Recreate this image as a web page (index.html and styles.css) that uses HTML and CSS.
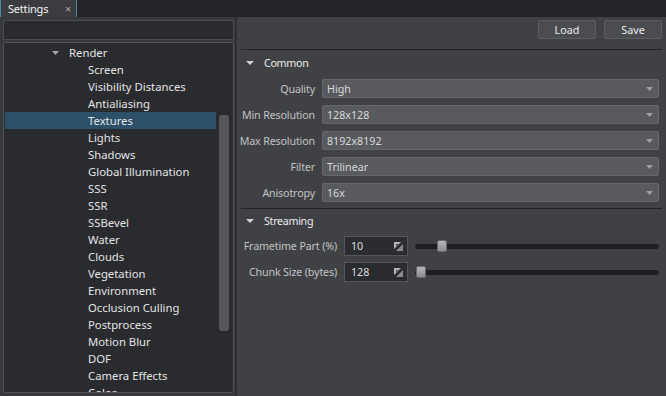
FILE: index.html
```html
<!DOCTYPE html>
<html>
<head>
<meta charset="utf-8">
<link rel="stylesheet" href="styles.css">
</head>
<body>
<div class="tabbar">
  <div class="tab"><span class="tab-title">Settings</span><span class="tab-close">×</span></div>
</div>
<div class="main">
  <div class="left">
    <div class="search"></div>
    <div class="tree">
      <div class="tree-list">
        <div class="row lvl1"><svg class="caret" width="7" height="4" viewBox="0 0 7 4"><polygon points="0,0 7,0 3.5,4" fill="#a3a4a6"/></svg><span>Render</span></div>
        <div class="row lvl2">Screen</div>
        <div class="row lvl2">Visibility Distances</div>
        <div class="row lvl2">Antialiasing</div>
        <div class="row lvl2 selected">Textures</div>
        <div class="row lvl2">Lights</div>
        <div class="row lvl2">Shadows</div>
        <div class="row lvl2">Global Illumination</div>
        <div class="row lvl2">SSS</div>
        <div class="row lvl2">SSR</div>
        <div class="row lvl2">SSBevel</div>
        <div class="row lvl2">Water</div>
        <div class="row lvl2">Clouds</div>
        <div class="row lvl2">Vegetation</div>
        <div class="row lvl2">Environment</div>
        <div class="row lvl2">Occlusion Culling</div>
        <div class="row lvl2">Postprocess</div>
        <div class="row lvl2">Motion Blur</div>
        <div class="row lvl2">DOF</div>
        <div class="row lvl2">Camera Effects</div>
        <div class="row lvl2">Color</div>
      </div>
      <div class="scroll-track"><div class="scroll-thumb"></div></div>
    </div>
  </div>
  <div class="divider"></div>
  <div class="right">
    <div class="toolbar">
      <button class="btn">Load</button>
      <button class="btn">Save</button>
    </div>
    <div class="sep"></div>
    <div class="section-head first"><svg class="caret" width="8" height="4" viewBox="0 0 8 4"><polygon points="0,0 8,0 4,4" fill="#d0d1d3"/></svg><span>Common</span></div>
    <div class="grid common">
      <div class="label"><span>Quality</span></div>
      <div class="select"><span>High</span><svg width="7" height="4" viewBox="0 0 7 4"><polygon points="0,0 7,0 3.5,4" fill="#9fa0a2"/></svg></div>
      <div class="label"><span>Min Resolution</span></div>
      <div class="select"><span>128x128</span><svg width="7" height="4" viewBox="0 0 7 4"><polygon points="0,0 7,0 3.5,4" fill="#9fa0a2"/></svg></div>
      <div class="label"><span>Max Resolution</span></div>
      <div class="select"><span>8192x8192</span><svg width="7" height="4" viewBox="0 0 7 4"><polygon points="0,0 7,0 3.5,4" fill="#9fa0a2"/></svg></div>
      <div class="label"><span>Filter</span></div>
      <div class="select"><span>Trilinear</span><svg width="7" height="4" viewBox="0 0 7 4"><polygon points="0,0 7,0 3.5,4" fill="#9fa0a2"/></svg></div>
      <div class="label"><span>Anisotropy</span></div>
      <div class="select"><span>16x</span><svg width="7" height="4" viewBox="0 0 7 4"><polygon points="0,0 7,0 3.5,4" fill="#9fa0a2"/></svg></div>
    </div>
    <div class="sep"></div>
    <div class="section-head"><svg class="caret" width="8" height="4" viewBox="0 0 8 4"><polygon points="0,0 8,0 4,4" fill="#d0d1d3"/></svg><span>Streaming</span></div>
    <div class="grid streaming">
      <div class="label"><span>Frametime Part (%)</span></div>
      <div class="spin"><span>10</span><svg width="9" height="9" viewBox="0 0 9 9"><polygon points="0,0 7,0 0,7" fill="#b4b5b7"/><polygon points="9,2 9,9 2,9" fill="#8a8b8e"/><polygon points="2,2 5,2 2,5" fill="#5c5d60"/></svg></div>
      <div class="slider"><div class="track"></div><div class="thumb" style="left:22px"></div></div>
      <div class="label"><span>Chunk Size (bytes)</span></div>
      <div class="spin"><span>128</span><svg width="9" height="9" viewBox="0 0 9 9"><polygon points="0,0 7,0 0,7" fill="#b4b5b7"/><polygon points="9,2 9,9 2,9" fill="#8a8b8e"/><polygon points="2,2 5,2 2,5" fill="#5c5d60"/></svg></div>
      <div class="slider"><div class="track"></div><div class="thumb" style="left:1px"></div></div>
    </div>
  </div>
</div>
</body>
</html>
```
FILE: styles.css
```css
* { box-sizing: border-box; }
html, body { margin: 0; padding: 0; }
body {
  width: 666px;
  height: 396px;
  overflow: hidden;
  background: #3b3c40;
  font-family: "Noto Sans", "DejaVu Sans", sans-serif;
  font-size: 11.3px;
  color: #d6d7d9;
}
.tabbar {
  height: 17px;
  background: #232427;
  display: flex;
}
.tab {
  width: 77px;
  height: 17px;
  background: #3a3c40;
  border-left: 1px solid #4f87ad;
  border-right: 1px solid #4f87ad;
  display: flex;
  align-items: center;
  padding-left: 7px;
  color: #f4f4f4;
  font-size: 11px;
  letter-spacing: -0.2px;
}
.tab-title { flex: 1; }
.tab-close { color: #a9aaac; margin-right: 5px; font-size: 11px; }
.main {
  display: flex;
  height: 379px;
}
.left {
  width: 235px;
  padding: 3px 0 0 3px;
  display: flex;
  flex-direction: column;
  gap: 2px;
  background: #38393d;
}
.search {
  width: 231px;
  height: 20px;
  background: #2a2b2e;
  border: 1px solid #4a4b4f;
}
.tree {
  width: 231px;
  height: 351px;
  background: #2a2b2e;
  border: 1px solid #515256;
  border-radius: 0 0 3px 3px;
  display: flex;
  overflow: hidden;
}
.tree-list {
  width: 214px;
  padding: 1px 0 0 1px;
  color: #e2e3e5;
}
.row {
  height: 17px;
  display: flex;
  align-items: center;
  white-space: nowrap;
}
.lvl1 { padding-left: 47px; }
.lvl1 .caret { margin-right: 10px; }
.lvl2 { padding-left: 83px; }
.selected { background: #2c5068; }
.scroll-track {
  width: 17px;
  padding: 72px 0 0 3px;
}
.scroll-thumb {
  width: 10px;
  height: 216px;
  background: #56575b;
  border-radius: 3px;
}
.divider {
  width: 2px;
  background: #2f3033;
}
.right {
  flex: 1;
  background: #404145;
  padding: 3px 4px 0 4px;
  display: flex;
  flex-direction: column;
  font-size: 10.7px;
}
.toolbar {
  display: flex;
  justify-content: flex-end;
  gap: 8px;
}
.btn {
  width: 58px;
  height: 19px;
  margin: 0;
  padding: 0;
  background: #4b4c50;
  border: 1px solid #5c5d61;
  border-radius: 2px;
  color: #eaeaea;
  font-family: inherit;
  font-size: 10.8px;
}
.sep {
  height: 1px;
  background: #222326;
  flex: none;
}
.toolbar + .sep { margin-top: 10px; }
.section-head {
  height: 24px;
  display: flex;
  align-items: center;
  padding-left: 5px;
  color: #eaebed;
  font-size: 10.7px;
  letter-spacing: -0.3px;
}
.section-head.first { height: 26px; }
.section-head .caret { margin-right: 10px; }
.grid {
  display: grid;
  column-gap: 7px;
  padding-top: 3px;
  align-items: center;
}
.grid.common {
  grid-template-columns: 74px 337px;
  row-gap: 7px;
  grid-auto-rows: 19px;
  padding-bottom: 6px;
}
.grid.streaming {
  grid-template-columns: 96px 64px 244px;
  row-gap: 6px;
  grid-auto-rows: 20px;
}
.label {
  display: flex;
  justify-content: flex-end;
  white-space: nowrap;
  color: #c0c1c3;
  letter-spacing: -0.15px;
}
.select {
  height: 19px;
  background: #595a5e;
  border: 1px solid #66676b;
  border-radius: 2px;
  display: flex;
  align-items: center;
  justify-content: space-between;
  padding: 0 5px 0 4px;
  color: #d8d9db;
}
.spin {
  height: 20px;
  background: #2b2c2f;
  border: 1px solid #545559;
  display: flex;
  align-items: center;
  justify-content: space-between;
  padding: 0 4px 0 6px;
  color: #dcdddf;
}
.slider {
  position: relative;
  height: 20px;
  display: flex;
  align-items: center;
}
.track {
  width: 100%;
  height: 5px;
  background: #1e1f21;
  border-radius: 3px;
}
.thumb {
  position: absolute;
  top: 4px;
  width: 10px;
  height: 12px;
  border-radius: 2px;
  background: linear-gradient(#b4b5b7, #8c8d90);
  border: 1px solid #6a6b6e;
}
```
